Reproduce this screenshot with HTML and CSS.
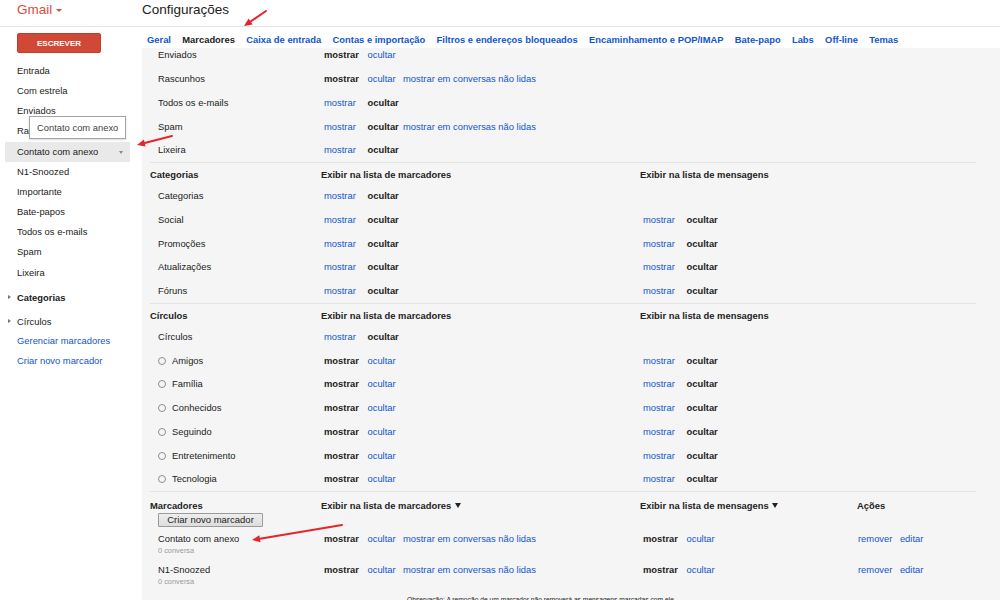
FILE: index.html
```html
<!DOCTYPE html>
<html lang="pt-BR">
<head>
<meta charset="utf-8">
<title>Gmail - Configurações</title>
<link rel="stylesheet" href="styles.css">
</head>
<body>
<div class="page">
  <header class="topbar">
    <div class="brand">Gmail <span class="caret"></span></div>
    <h1 class="title">Configurações</h1>
  </header>
  <div class="main">
    <nav class="sidebar">
      <button class="compose">ESCREVER</button>
      <ul class="nav">
        <li>Entrada</li>
        <li>Com estrela</li>
        <li>Enviados</li>
        <li>Rascunhos</li>
        <li class="active">Contato com anexo <span class="navdrop"></span></li>
        <li>N1-Snoozed</li>
        <li>Importante</li>
        <li>Bate-papos</li>
        <li>Todos os e-mails</li>
        <li>Spam</li>
        <li>Lixeira</li>
        <li class="group bold"><span class="tri"></span>Categorias</li>
        <li class="group"><span class="tri"></span>Círculos</li>
        <li class="navlink first">Gerenciar marcadores</li>
        <li class="navlink">Criar novo marcador</li>
      </ul>
    </nav>
    <section class="settings">
      <div class="tabs">
        <a class="tab">Geral</a>
        <a class="tab current">Marcadores</a>
        <a class="tab">Caixa de entrada</a>
        <a class="tab">Contas e importação</a>
        <a class="tab">Filtros e endereços bloqueados</a>
        <a class="tab">Encaminhamento e POP/IMAP</a>
        <a class="tab">Bate-papo</a>
        <a class="tab">Labs</a>
        <a class="tab">Off-line</a>
        <a class="tab">Temas</a>
      </div>
      <div class="panel">
        <div class="scroll">
          <div class="sec">
            <div class="row"><div class="lbl">Enviados</div><div class="opts"><b>mostrar</b><a>ocultar</a></div><div></div><div></div></div>
            <div class="row"><div class="lbl">Rascunhos</div><div class="opts"><b>mostrar</b><a>ocultar</a><a>mostrar em conversas não lidas</a></div><div></div><div></div></div>
            <div class="row"><div class="lbl">Todos os e-mails</div><div class="opts"><a>mostrar</a><b>ocultar</b></div><div></div><div></div></div>
            <div class="row"><div class="lbl">Spam</div><div class="opts"><a>mostrar</a><b>ocultar</b><a>mostrar em conversas não lidas</a></div><div></div><div></div></div>
            <div class="row"><div class="lbl">Lixeira</div><div class="opts"><a>mostrar</a><b>ocultar</b></div><div></div><div></div></div>
          </div>

          <div class="sec">
            <div class="row head"><div>Categorias</div><div>Exibir na lista de marcadores</div><div>Exibir na lista de mensagens</div><div></div></div>
            <div class="row"><div class="lbl">Categorias</div><div class="opts"><a>mostrar</a><b>ocultar</b></div><div></div><div></div></div>
            <div class="row"><div class="lbl">Social</div><div class="opts"><a>mostrar</a><b>ocultar</b></div><div class="opts"><a>mostrar</a><b>ocultar</b></div><div></div></div>
            <div class="row"><div class="lbl">Promoções</div><div class="opts"><a>mostrar</a><b>ocultar</b></div><div class="opts"><a>mostrar</a><b>ocultar</b></div><div></div></div>
            <div class="row"><div class="lbl">Atualizações</div><div class="opts"><a>mostrar</a><b>ocultar</b></div><div class="opts"><a>mostrar</a><b>ocultar</b></div><div></div></div>
            <div class="row"><div class="lbl">Fóruns</div><div class="opts"><a>mostrar</a><b>ocultar</b></div><div class="opts"><a>mostrar</a><b>ocultar</b></div><div></div></div>
          </div>

          <div class="sec">
            <div class="row head"><div>Círculos</div><div>Exibir na lista de marcadores</div><div>Exibir na lista de mensagens</div><div></div></div>
            <div class="row"><div class="lbl">Círculos</div><div class="opts"><a>mostrar</a><b>ocultar</b></div><div></div><div></div></div>
            <div class="row"><div class="lbl"><span class="circ"></span>Amigos</div><div class="opts"><b>mostrar</b><a>ocultar</a></div><div class="opts"><a>mostrar</a><b>ocultar</b></div><div></div></div>
            <div class="row"><div class="lbl"><span class="circ"></span>Família</div><div class="opts"><b>mostrar</b><a>ocultar</a></div><div class="opts"><a>mostrar</a><b>ocultar</b></div><div></div></div>
            <div class="row"><div class="lbl"><span class="circ"></span>Conhecidos</div><div class="opts"><b>mostrar</b><a>ocultar</a></div><div class="opts"><a>mostrar</a><b>ocultar</b></div><div></div></div>
            <div class="row"><div class="lbl"><span class="circ"></span>Seguindo</div><div class="opts"><b>mostrar</b><a>ocultar</a></div><div class="opts"><a>mostrar</a><b>ocultar</b></div><div></div></div>
            <div class="row"><div class="lbl"><span class="circ"></span>Entretenimento</div><div class="opts"><b>mostrar</b><a>ocultar</a></div><div class="opts"><a>mostrar</a><b>ocultar</b></div><div></div></div>
            <div class="row"><div class="lbl"><span class="circ"></span>Tecnologia</div><div class="opts"><b>mostrar</b><a>ocultar</a></div><div class="opts"><a>mostrar</a><b>ocultar</b></div><div></div></div>
          </div>

          <div class="sec last">
            <div class="row head tall">
              <div class="hcol">Marcadores<button class="newlabel">Criar novo marcador</button></div>
              <div>Exibir na lista de marcadores <span class="sort"></span></div>
              <div>Exibir na lista de mensagens <span class="sort"></span></div>
              <div>Ações</div>
            </div>
            <div class="row user">
              <div class="lbl"><div class="uname">Contato com anexo</div><div class="ucount">0 conversa</div></div>
              <div class="opts"><b>mostrar</b><a>ocultar</a><a>mostrar em conversas não lidas</a></div>
              <div class="opts"><b>mostrar</b><a>ocultar</a></div>
              <div class="acts"><a>remover</a><a>editar</a></div>
            </div>
            <div class="row user">
              <div class="lbl"><div class="uname">N1-Snoozed</div><div class="ucount">0 conversa</div></div>
              <div class="opts"><b>mostrar</b><a>ocultar</a><a>mostrar em conversas não lidas</a></div>
              <div class="opts"><b>mostrar</b><a>ocultar</a></div>
              <div class="acts"><a>remover</a><a>editar</a></div>
            </div>
            <p class="note">Observação: A remoção de um marcador não removerá as mensagens marcadas com ele.</p>
          </div>
        </div>
      </div>
    </section>
  </div>

  <div class="tooltip">Contato com anexo</div>

  <svg class="arrows" width="1000" height="600" viewBox="0 0 1000 600" aria-hidden="true">
    <g stroke="#e3262b" stroke-width="2" stroke-linecap="round" fill="none">
      <line x1="266" y1="11" x2="250.6" y2="21.5"/>
      <line x1="172" y1="136" x2="144.7" y2="143"/>
      <line x1="342" y1="525" x2="259.9" y2="538.7"/>
    </g>
    <g fill="#e3262b">
      <polygon points="244,26 252.6,24.4 248.6,18.6"/>
      <polygon points="137,145 145.6,146.4 143.9,139.6"/>
      <polygon points="252,540 260.5,542.2 259.3,535.2"/>
    </g>
  </svg>
</div>
</body>
</html>
```

FILE: styles.css
```css
* { box-sizing: border-box; }

html, body {
  margin: 0;
  padding: 0;
  background: #ffffff;
}

body {
  font-family: "Liberation Sans", Arial, sans-serif;
  font-size: 9.4px;
  color: #222222;
}

a { color: #1155cc; cursor: pointer; }
b { font-weight: bold; color: #222222; }

.page {
  position: relative;
  width: 1000px;
  height: 600px;
  overflow: hidden;
  display: flex;
  flex-direction: column;
}

/* ---------- top bar ---------- */
.topbar {
  flex: none;
  height: 27px;
  border-bottom: 1px solid #e5e5e5;
  display: flex;
  align-items: flex-start;
  padding-top: 2px;
}

.brand {
  width: 142px;
  flex: none;
  padding-left: 17px;
  color: #dd4b39;
  font-size: 13.5px;
  line-height: 15.5px;
  display: flex;
  align-items: center;
}

.caret {
  width: 0;
  height: 0;
  margin-left: 4px;
  margin-top: 1px;
  border-left: 3px solid transparent;
  border-right: 3px solid transparent;
  border-top: 3px solid #dd4b39;
}

.title {
  margin: 0;
  font-weight: normal;
  font-size: 13.5px;
  line-height: 15.5px;
  color: #222222;
}

/* ---------- main ---------- */
.main {
  flex: 1;
  display: flex;
  min-height: 0;
}

.sidebar {
  width: 142px;
  flex: none;
}

.compose {
  display: block;
  margin: 6px 0 0 17px;
  width: 84px;
  height: 20px;
  padding: 0;
  background: #d14836;
  color: #ffffff;
  border: 1px solid #c13e2c;
  border-radius: 2px;
  font-family: "Liberation Sans", Arial, sans-serif;
  font-weight: bold;
  font-size: 8px;
  text-align: center;
}

.nav {
  list-style: none;
  margin: 8px 0 0;
  padding: 0;
}

.nav li {
  position: relative;
  margin-left: 5px;
  width: 125px;
  height: 20.16px;
  line-height: 20.16px;
  padding-left: 12px;
  white-space: nowrap;
  color: #222222;
}

.nav li.active { background: #e9e9e9; }

.navdrop {
  position: absolute;
  left: 114px;
  top: 9px;
  width: 0;
  height: 0;
  border-left: 2.5px solid transparent;
  border-right: 2.5px solid transparent;
  border-top: 3px solid #8a8a8a;
}

.nav li.group { height: 20px; line-height: 20px; }
.nav li.group.bold { margin-top: 5px; font-weight: bold; }
.nav li.group + li.group { margin-top: 4px; }

.tri {
  position: absolute;
  left: 3px;
  top: 7.5px;
  width: 0;
  height: 0;
  border-top: 2.5px solid transparent;
  border-bottom: 2.5px solid transparent;
  border-left: 3px solid #777777;
}

.nav li.navlink { color: #1155cc; height: 20px; line-height: 20px; }
.nav li.navlink.first { margin-top: -1px; }

.tooltip {
  position: absolute;
  left: 29px;
  top: 116px;
  width: 97px;
  height: 23px;
  padding-left: 7px;
  line-height: 22px;
  background: #ffffff;
  border: 1px solid #a3a3a3;
  box-shadow: 0 1px 2px rgba(0, 0, 0, 0.15);
  color: #444444;
  white-space: nowrap;
}

/* ---------- settings ---------- */
.settings {
  flex: 1;
  display: flex;
  flex-direction: column;
  min-width: 0;
}

.tabs {
  flex: none;
  display: flex;
  gap: 11.3px;
  padding: 7px 0 2px 5px;
  line-height: 12px;
  font-weight: bold;
  white-space: nowrap;
}

.tab { color: #1155cc; }
.tab.current { color: #222222; }

.panel {
  flex: 1;
  min-height: 0;
  overflow: hidden;
  background: #f5f5f5;
  padding-left: 8px;
}

.scroll { margin-top: -4.4px; }

.sec { margin-right: 24px; }
.sec + .sec { border-top: 1px solid #e4e4e4; }

.row {
  display: grid;
  grid-template-columns: 171px 319px 217px 1fr;
  align-items: center;
  height: 23.76px;
  line-height: 12px;
  white-space: nowrap;
}

.row.head {
  height: 21px;
  padding-top: 3px;
  font-weight: bold;
}

.lbl {
  padding-left: 8px;
  display: flex;
  align-items: center;
}

.opts {
  display: flex;
  padding-left: 3px;
}

.opts > :nth-child(1) { width: 43.5px; flex: none; }
.opts > :nth-child(2) { width: 35.5px; flex: none; }

.circ {
  width: 8px;
  height: 8px;
  margin-right: 6px;
  border: 1.5px solid #8f8f8f;
  border-radius: 50%;
  flex: none;
}

/* user labels section */
.row.tall {
  height: auto;
  align-items: start;
  padding-top: 8px;
}

.hcol {
  display: flex;
  flex-direction: column;
  align-items: flex-start;
}

.newlabel {
  margin: 1px 0 0 8px;
  width: 105px;
  height: 14px;
  padding: 0;
  font-family: "Liberation Sans", Arial, sans-serif;
  font-size: 9.5px;
  font-weight: normal;
  line-height: 12px;
  color: #222222;
  background: linear-gradient(#eeeeee, #dddddd);
  border: 1px solid #9a9a9a;
  border-radius: 1px;
}

.sort {
  display: inline-block;
  width: 0;
  height: 0;
  margin-left: 1px;
  vertical-align: 1px;
  border-left: 3px solid transparent;
  border-right: 3px solid transparent;
  border-top: 5px solid #222222;
}

.row.user {
  height: auto;
  align-items: start;
  padding-top: 6px;
  padding-bottom: 0.7px;
}

.row.user .lbl {
  flex-direction: column;
  align-items: flex-start;
}

.uname { line-height: 12px; }

.ucount {
  font-size: 7.4px;
  line-height: 12px;
  color: #999999;
}

.acts {
  display: flex;
  gap: 7.5px;
  padding-left: 1px;
}

.note {
  margin: 6px 0 0;
  padding-left: 257px;
  font-size: 6.7px;
  line-height: 9px;
  color: #222222;
  white-space: nowrap;
}

/* ---------- annotation arrows ---------- */
.arrows {
  position: absolute;
  left: 0;
  top: 0;
  pointer-events: none;
}
```
